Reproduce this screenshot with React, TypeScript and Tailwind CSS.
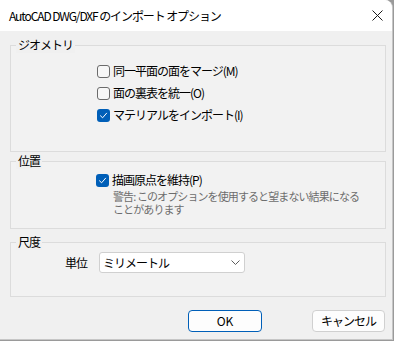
import type { ReactNode } from "react";

const font = {
  fontFamily: '"Noto Sans CJK JP", "Noto Sans", sans-serif',
};

function Check({ checked }: { checked?: boolean }) {
  if (checked) {
    return (
      <span className="flex h-[13px] w-[13px] shrink-0 items-center justify-center rounded-[3px] bg-[#005fb8]">
        <svg width="9" height="9" viewBox="0 0 9 9" fill="none">
          <path d="M1.5 4.8 L3.6 6.8 L7.6 2.2" stroke="#ffffff" strokeWidth="1" strokeLinecap="round" strokeLinejoin="round" />
        </svg>
      </span>
    );
  }
  return <span className="h-[13px] w-[13px] shrink-0 rounded-[3px] border border-[#6b6b6b] bg-[#f7f7f7]" />;
}

function Group({ title, className, children }: { title: string; className: string; children: ReactNode }) {
  return (
    <div className={`relative ml-[10px] w-[376px] border border-[#dcdcdc] bg-[#f2f2f2] ${className}`}>
      <span className="absolute -top-[9px] left-[5px] bg-[#f0f0f0] px-[2px] text-[12px] leading-[16px] tracking-[-1px] text-black">
        {title}
      </span>
      {children}
    </div>
  );
}

function Option({ label, accel, checked }: { label: string; accel: string; checked?: boolean }) {
  return (
    <div className="flex h-[22px] items-center gap-[3px]">
      <Check checked={checked} />
      <span className="whitespace-nowrap text-[12px] leading-[16px] tracking-[-1px] text-black">
        {label}({accel})
      </span>
    </div>
  );
}

export default function App() {
  return (
    <div className="h-[341px] w-[394px] bg-[#9a9a9a]" style={font}>
      <div className="flex h-[340px] w-[393px] flex-col overflow-hidden rounded-tr-[8px] border-b border-r border-[#c6c6c6] bg-[#f0f0f0]">
        {/* title bar */}
        <div className="flex h-[31px] shrink-0 items-center justify-between bg-white pl-[9px] pr-[8px]">
          <span className="whitespace-pre text-[12px] leading-[16px] tracking-[-1.1px] text-black">
            AutoCAD DWG/DXF のインポート オプション
          </span>
          <svg width="11" height="11" viewBox="0 0 11 11" className="mr-[1px]">
            <path d="M0.5 0.5 L10.5 10.5 M10.5 0.5 L0.5 10.5" stroke="#1a1a1a" strokeWidth="1" />
          </svg>
        </div>

        <Group title="ジオメトリ" className="mt-[14px] h-[107px] pl-[86px] pt-[14px]">
          <Option label="同一平面の面をマージ" accel="M" />
          <Option label="面の裏表を統一" accel="O" />
          <Option label="マテリアルをインポート" accel="I" checked />
        </Group>

        <Group title="位置" className="mt-[9px] h-[68px] pl-[85px] pt-[7px]">
          <Option label="描画原点を維持" accel="P" checked />
          <div className="-mt-[1px] ml-[17px] whitespace-nowrap text-[11px] leading-[13px] tracking-[-0.9px] text-[#6d6d6d]">
            <div>警告: このオプションを使用すると望まない結果になる</div>
            <div>ことがあります</div>
          </div>
        </Group>

        <Group title="尺度" className="mt-[13px] h-[55px] pt-[9px]">
          <div className="flex items-center">
            <span className="ml-[54px] mr-[12px] text-[12px] leading-[16px] tracking-[-1px] text-black">単位</span>
            <div className="flex h-[21px] w-[146px] items-center justify-between rounded-[3px] border border-[#d0d0d0] bg-white pl-[3px] pr-[4px]">
              <span className="text-[12px] leading-[16px] tracking-[-1px] text-black">ミリメートル</span>
              <svg width="9" height="5" viewBox="0 0 9 5" fill="none">
                <path d="M0.5 0.5 L4.5 4.5 L8.5 0.5" stroke="#5c5c5c" strokeWidth="1" />
              </svg>
            </div>
          </div>
        </Group>

        <div className="mt-[13px] flex">
          <button className="ml-[188px] h-[22px] w-[74px] rounded-[4px] border border-[#005fb8] bg-[#fdfdfd] text-[12px] leading-[16px] text-black">
            OK
          </button>
          <button className="ml-[50px] h-[22px] w-[73px] rounded-[4px] border border-[#d0d0d0] bg-[#fdfdfd] text-[12px] leading-[16px] tracking-[-1px] text-black">
            キャンセル
          </button>
        </div>
      </div>
    </div>
  );
}
